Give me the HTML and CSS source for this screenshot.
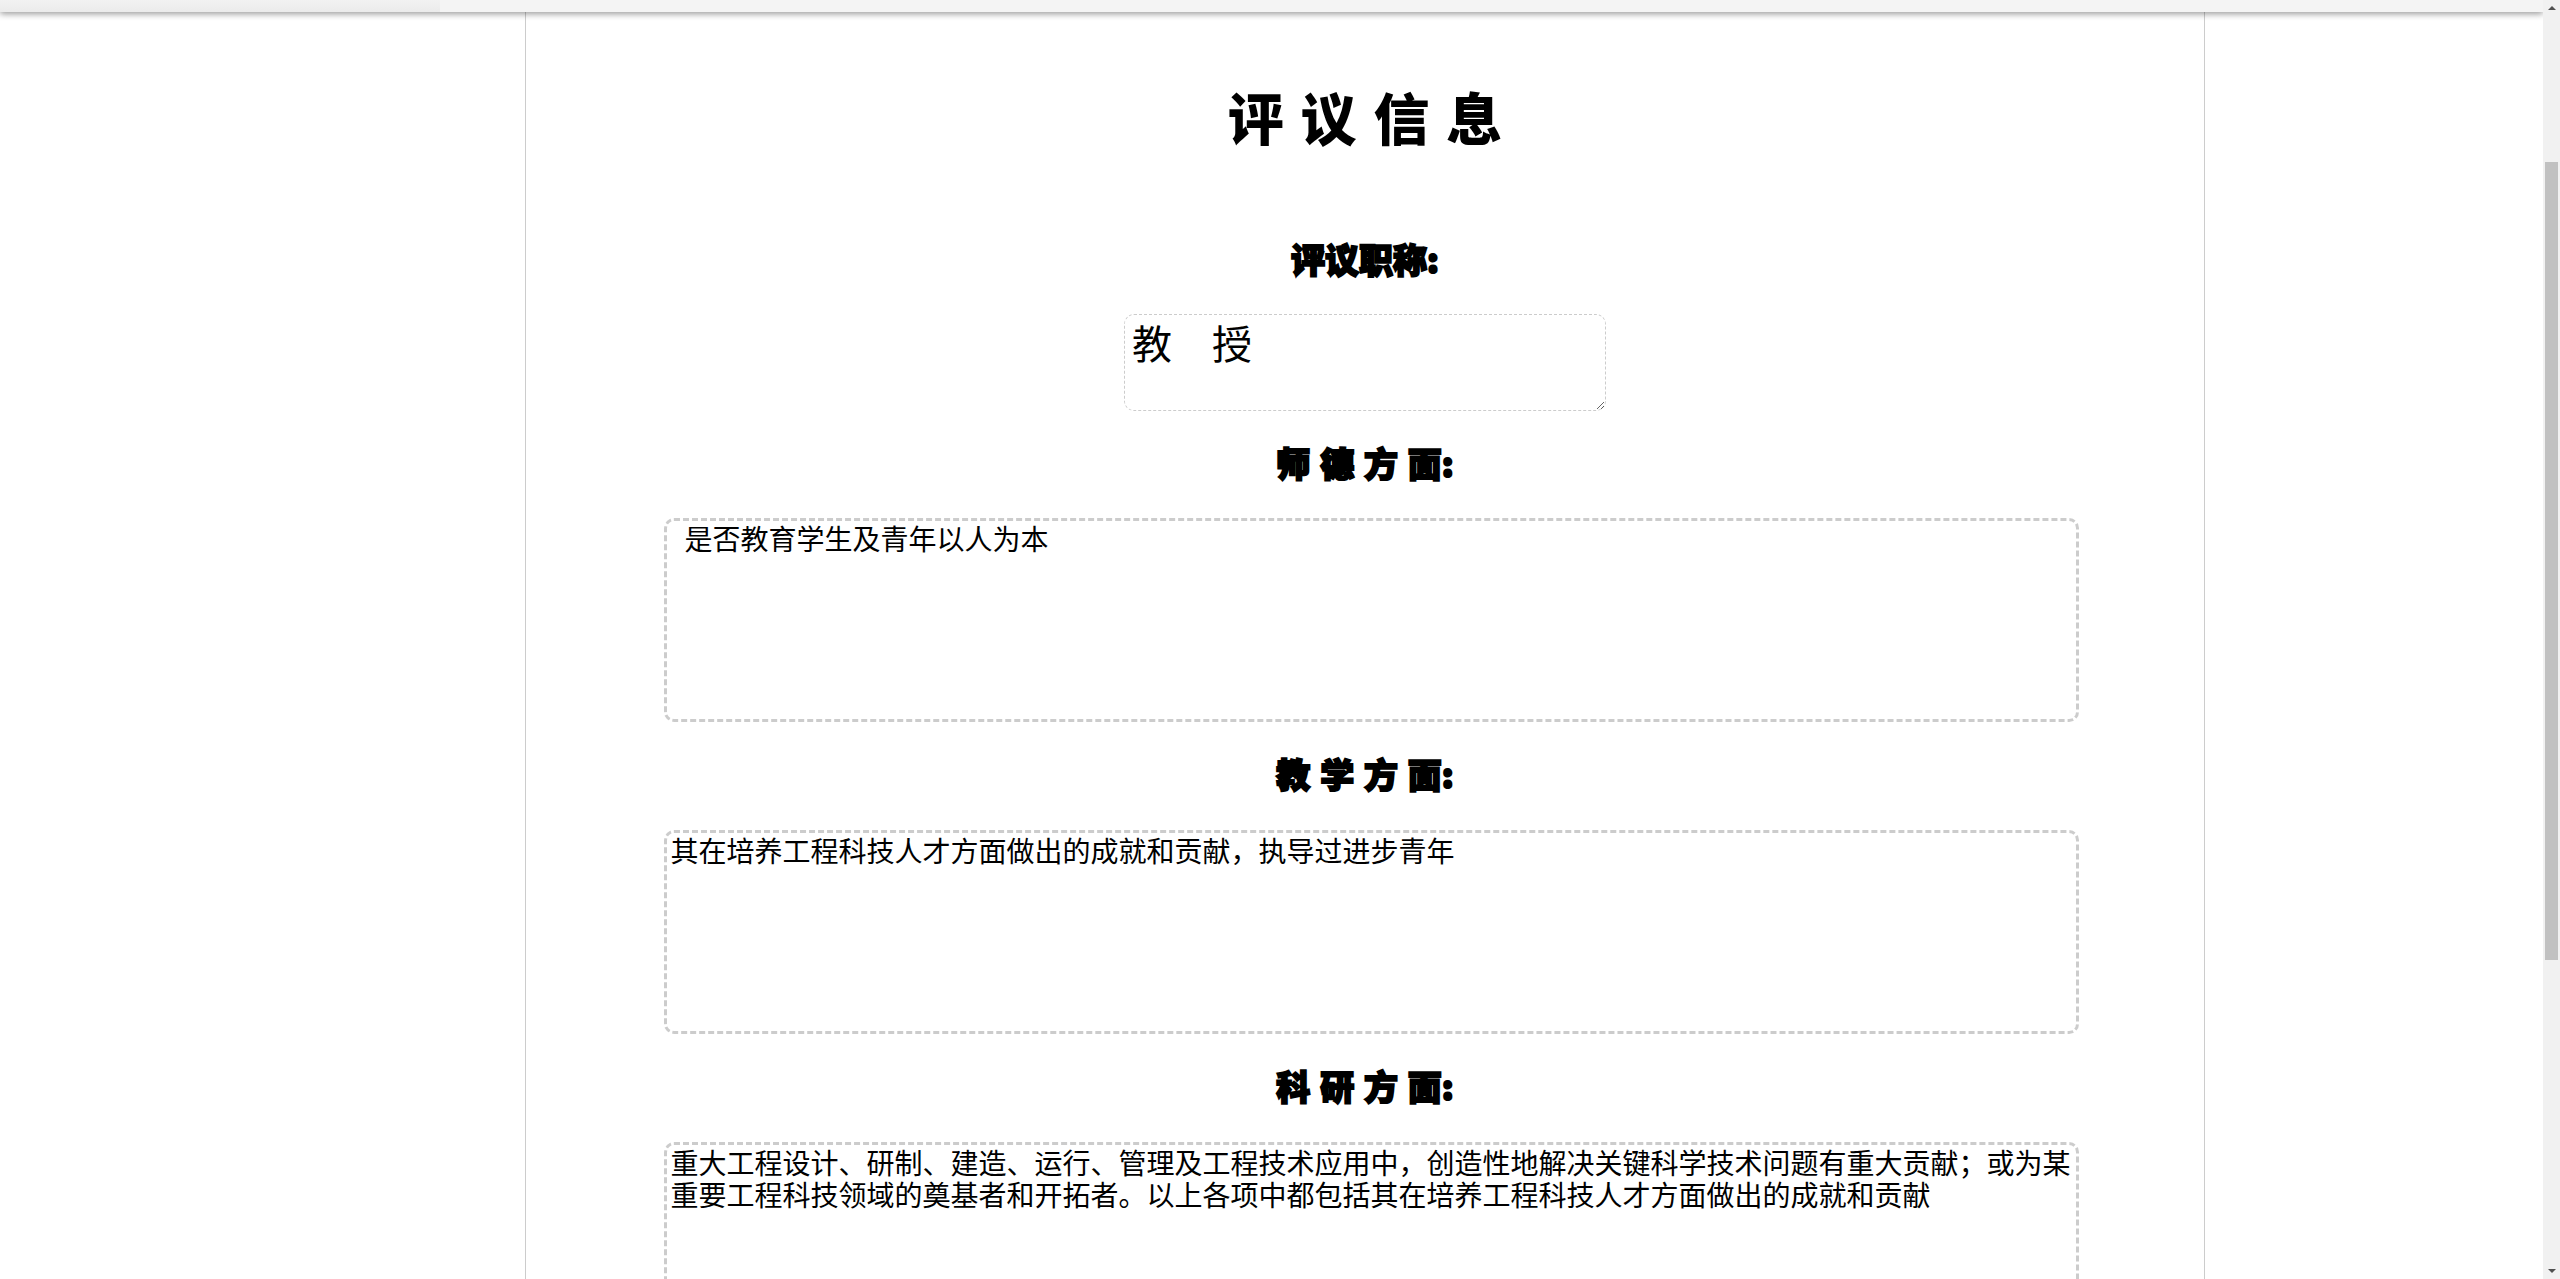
FILE: index.html
```html
<!DOCTYPE html>
<html lang="zh-CN">
<head>
    <meta charset="UTF-8">
    <title>评议信息</title>
    <link rel="stylesheet" href="styles.css">
</head>
<body>
    <div class="viewport">
        <div class="topbar">
            <div class="tab"></div>
        </div>
        <div class="page">
            <div class="content">
                <h1 class="title">评 议 信 息</h1>

                <h2 class="label label-first">评议职称:</h2>
                <textarea class="rank">教&#x3000;授</textarea>

                <h2 class="label label-ethics">师 德 方 面:</h2>
                <textarea class="review">&#x2002;是否教育学生及青年以人为本</textarea>

                <h2 class="label">教 学 方 面:</h2>
                <textarea class="review">其在培养工程科技人才方面做出的成就和贡献&#xFF0C;执导过进步青年</textarea>

                <h2 class="label">科 研 方 面:</h2>
                <textarea class="review">重大工程设计、研制、建造、运行、管理及工程技术应用中&#xFF0C;创造性地解决关键科学技术问题有重大贡献&#xFF1B;或为某重要工程科技领域的奠基者和开拓者。以上各项中都包括其在培养工程科技人才方面做出的成就和贡献</textarea>
            </div>
        </div>
    </div>
    <div class="scrollbar">
        <div class="arrow-up"></div>
        <div class="track">
            <div class="thumb"></div>
        </div>
        <div class="arrow-down"></div>
    </div>
</body>
</html>
```

FILE: styles.css
```css
html, body {
    margin: 0;
    height: 100%;
    overflow: hidden;
    background-color: #fff;
}
body {
    display: flex;
    font-family: "Noto Sans CJK SC", sans-serif;
}
.viewport {
    flex: 1;
    height: 1279px;
    overflow: hidden;
    display: flex;
    flex-direction: column;
}
.topbar {
    height: 12px;
    flex-shrink: 0;
    background-color: #f4f4f4;
    box-shadow: 0 2px 6px rgba(0, 0, 0, 0.4);
    position: relative;
    z-index: 1;
}
.tab {
    width: 440px;
    height: 12px;
    background: linear-gradient(#f2f2f2, #ebebeb);
}
.page {
    flex: 1;
    overflow: hidden;
}
.content {
    box-sizing: border-box;
    width: 1680px;
    margin-left: 525px;
    min-height: 1500px;
    border-left: 1px solid #ccc;
    border-right: 1px solid #ccc;
    display: flex;
    flex-direction: column;
    align-items: center;
}
.title {
    margin: 0;
    padding-top: 71px;
    font-size: 56px;
    font-weight: 900;
    line-height: 66px;
    word-spacing: 4px;
}
.label {
    margin: 32px 0 36px;
    font-size: 34px;
    font-weight: 900;
    line-height: 40px;
    word-spacing: 2px;
    -webkit-text-stroke: 2px #000;
    color: #000;
}
.label-first {
    margin: 90px 0 35px;
}
.label-ethics {
    margin: 32px 0 35px;
}
.rank {
    box-sizing: border-box;
    flex-shrink: 0;
    width: 482px;
    height: 97px;
    padding: 4px 7px;
    border: 1px dashed #ccc;
    border-radius: 10px;
    outline: none;
    font-family: inherit;
    font-size: 40px;
    line-height: 46px;
    color: #000;
}
.review {
    box-sizing: border-box;
    flex-shrink: 0;
    width: 1415px;
    height: 204px;
    padding: 1px 4px;
    border: 3px dashed #ccc;
    border-radius: 10px;
    outline: none;
    resize: none;
    overflow: hidden;
    font-family: inherit;
    font-size: 28px;
    line-height: 32px;
    color: #000;
    transform: translateX(6px);
}
.scrollbar {
    width: 17px;
    height: 1279px;
    flex-shrink: 0;
    background-color: #f1f1f1;
    display: flex;
    flex-direction: column;
    align-items: center;
}
.arrow-up, .arrow-down {
    width: 0;
    height: 0;
    border-left: 4px solid transparent;
    border-right: 4px solid transparent;
}
.arrow-up {
    margin-top: 6px;
    border-bottom: 4px solid #505050;
}
.arrow-down {
    margin-bottom: 6px;
    border-top: 4px solid #505050;
}
.track {
    flex: 1;
    width: 13px;
}
.thumb {
    margin-top: 152px;
    height: 798px;
    background-color: #c1c1c1;
}
```
